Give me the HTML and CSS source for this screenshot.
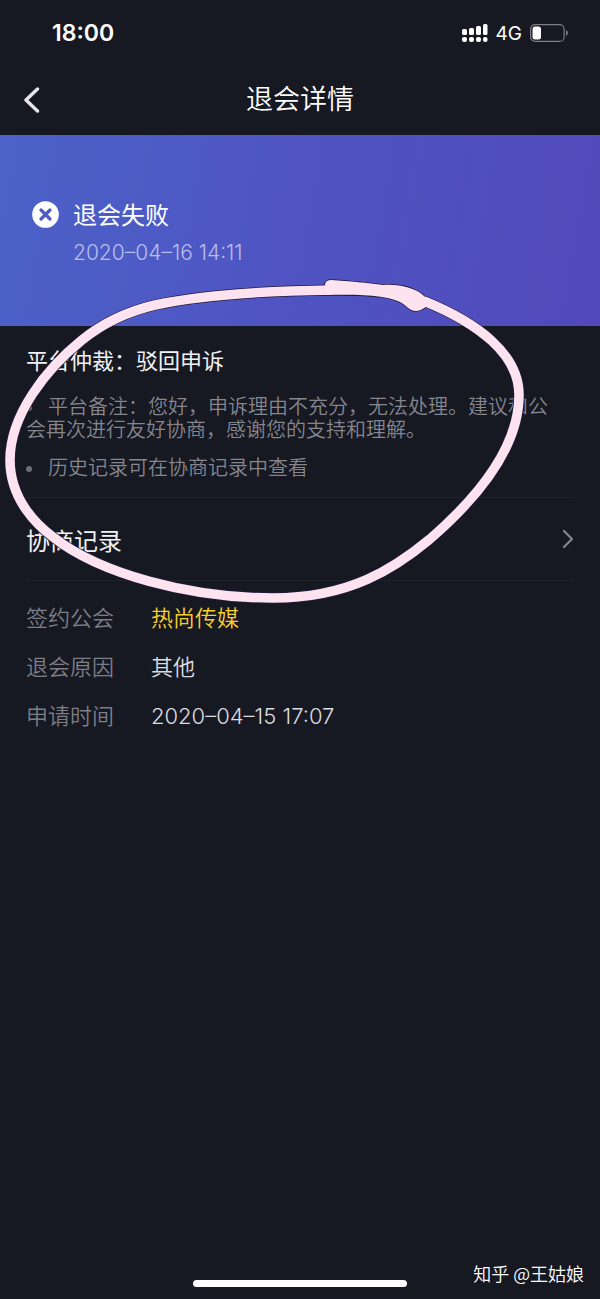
FILE: index.html
```html
<!DOCTYPE html>
<html lang="zh-CN">
<head>
<meta charset="utf-8">
<meta name="viewport" content="width=device-width, initial-scale=1">
<title>退会详情</title>
<link rel="stylesheet" href="styles.css">
</head>
<body>
<div class="page">
  <div class="status-bar">
    <span class="clock">18:00</span>
    <div class="indicators">
      <svg width="26" height="20" viewBox="0 0 26 20" fill="#fff" aria-hidden="true">
        <rect x="0" y="6" width="5" height="6" rx="1.5"/><rect x="7" y="5" width="5" height="7" rx="1.5"/><rect x="14" y="3" width="5" height="9" rx="1.5"/><rect x="21" y="1" width="4.500" height="11" rx="1.500"/>
        <rect x="0" y="14" width="5" height="5" rx="2"/><rect x="7" y="14" width="5" height="5" rx="2"/><rect x="14" y="14" width="5" height="5" rx="2"/><rect x="21" y="14" width="4.500" height="5" rx="2"/>
      </svg>
      <span class="network">4G</span>
      <svg width="38" height="18" viewBox="0 0 38 18" aria-hidden="true">
        <rect x="0.600" y="0.600" width="33.500" height="16.800" rx="4.500" fill="none" stroke="#7d7e86" stroke-width="1.200"/>
        <rect x="2.500" y="2.500" width="8.500" height="13" rx="2.500" fill="#fff"/>
        <path d="M36 6v6c1.200-.6 1.800-1.700 1.800-3S37.200 6.600 36 6z" fill="#7d7e86"/>
      </svg>
    </div>
  </div>

  <header class="nav">
    <button class="back" type="button" aria-label="返回">
      <svg width="16" height="26" viewBox="0 0 16 26" fill="none" stroke="#e6e6ea" stroke-width="3.400" stroke-linecap="round" stroke-linejoin="round" aria-hidden="true"><path d="M13.500 2 2 13 13.500 24"/></svg>
    </button>
    <h1 class="title">退会详情</h1>
  </header>

  <section class="banner">
    <svg width="27" height="27" viewBox="0 0 27 27" aria-hidden="true"><circle cx="13.500" cy="13.500" r="13.300" fill="#fff"/><path d="m9 9 9 9m0-9-9 9" stroke="#4f5bc4" stroke-width="3.200" stroke-linecap="round"/></svg>
    <div>
      <h2 class="result">退会失败</h2>
      <time class="result-time" datetime="2020-04-16T14:11">2020–04–16 14:11</time>
    </div>
  </section>

  <main class="content">
    <section class="verdict">
      <h3 class="verdict-title">平台仲裁：驳回申诉</h3>
      <ul class="notes">
        <li>平台备注：您好，申诉理由不充分，无法处理。建议和公会再次进行友好协商，感谢您的支持和理解。</li>
        <li>历史记录可在协商记录中查看</li>
      </ul>
    </section>
    <button class="records" type="button">
      <span>协商记录</span>
      <svg width="12" height="20" viewBox="0 0 12 20" fill="none" stroke="#85868d" stroke-width="2.200" stroke-linecap="round" stroke-linejoin="round" aria-hidden="true"><path d="m2 2 8 8-8 8"/></svg>
    </button>
    <dl class="details">
      <dt>签约公会</dt><dd class="guild">热尚传媒</dd>
      <dt>退会原因</dt><dd>其他</dd>
      <dt>申请时间</dt><dd>2020–04–15 17:07</dd>
    </dl>
  </main>

  <footer class="footer">
    <div class="home-indicator"></div>
    <span class="watermark">知乎 @王姑娘</span>
  </footer>

  <svg class="marker" width="530" height="610" viewBox="0 0 530 610" fill="none" aria-hidden="true">
    <defs>
      <path id="loop" d="M332 290C260 291 200 295 155 305C125 312 103 323 82 340C46 369 10 415 10 460C10 500 38 526 53 537C100 574 190 598 273 598C350 598 395 568 430 539C475 500 519 450 519 395C519 354 478 323 424 301"/>
      <path id="blob" d="M325 295V284Q326 280 331 280C350 281 368 283 383 285C401 284 415 288 424 296L430 300 427 306Q421 311 416 311Q411 311 407 307C401 301 393 299 382 297C360 294 343 295 325 295Z"/>
    </defs>
    <use href="#loop" stroke="#211b3c" stroke-width="11"/>
    <use href="#blob" fill="#211b3c" stroke="#211b3c" stroke-width="1.500"/>
    <use href="#loop" stroke="#fde2f0" stroke-width="9.500"/>
    <use href="#blob" fill="#fde2f0"/>
  </svg>
</div>
</body>
</html>
```

FILE: styles.css
```css
* {
  box-sizing: border-box;
}

body,
h1,
h2,
h3,
ul,
dl,
dd {
  margin: 0;
  padding: 0;
}

body {
  background: #161822;
  color: #fff;
  font-family: Inter, "Noto Sans CJK SC", sans-serif;
}

button {
  border: 0;
  padding: 0;
  background: none;
  color: inherit;
  font: inherit;
  cursor: pointer;
}

svg {
  display: block;
}

.page {
  position: relative;
  display: flex;
  flex-direction: column;
  min-height: 100vh;
}

.status-bar {
  display: flex;
  align-items: center;
  justify-content: space-between;
  height: 64px;
  padding: 2px 32px 0 52px;
}

.clock {
  font-size: 23px;
  font-weight: 600;
}

.indicators {
  display: flex;
  align-items: center;
  gap: 8px;
}

.network {
  font-size: 19px;
}

.nav {
  display: grid;
  grid-template-columns: 64px 1fr 64px;
  align-items: center;
  height: 71px;
}

.back {
  padding-left: 24px;
}

.title {
  font-size: 27px;
  font-weight: 350;
  line-height: 40px;
  text-align: center;
}

.banner {
  display: flex;
  gap: 14px;
  height: 191px;
  padding: 66px 32px 0;
  background: linear-gradient(100deg, #4b62c8 0%, #4f55c3 45%, #5249bb 100%);
}

.result {
  font-size: 24px;
  font-weight: 400;
  line-height: 30px;
}

.result-time {
  display: block;
  margin-top: 6px;
  color: #b9bdec;
  font-size: 21px;
  font-weight: 300;
  line-height: 32px;
}

.content {
  padding: 0 26px;
}

.verdict {
  padding: 20px 0 17px;
  border-bottom: 1px solid #20222c;
}

.verdict-title {
  font-size: 22px;
  font-weight: 400;
  line-height: 30px;
  color: #f2f2f4;
}

.notes {
  display: grid;
  gap: 15px;
  margin-top: 20px;
  padding-right: 18px;
  color: #85868e;
  font-size: 20px;
  font-weight: 350;
  line-height: 23px;
  list-style: none;
}

.notes li::before {
  content: "";
  display: inline-block;
  width: 6px;
  height: 6px;
  margin: 0 16px 2px 0;
  border-radius: 50%;
  background: #6d6e76;
  vertical-align: middle;
}

.records {
  display: flex;
  align-items: center;
  justify-content: space-between;
  width: 100%;
  height: 83px;
  border-bottom: 1px solid #20222c;
  font-size: 24px;
  font-weight: 400;
  color: #f2f2f4;
}

.details {
  display: grid;
  grid-template-columns: 88px 1fr;
  gap: 17px 37px;
  padding-top: 21px;
  font-size: 22px;
  font-weight: 350;
  line-height: 32px;
}

.details dt {
  color: #7d7e86;
}

.details dd {
  color: #dcdce0;
}

.details .guild {
  color: #f8d02e;
}

.footer {
  position: relative;
  display: flex;
  justify-content: center;
  margin-top: auto;
  padding: 20px 0 12px;
}

.home-indicator {
  width: 214px;
  height: 7px;
  border-radius: 4px;
  background: #fff;
}

.watermark {
  position: absolute;
  right: 16px;
  bottom: 13px;
  font-family: "Noto Sans CJK SC", sans-serif;
  font-size: 18px;
  font-weight: 350;
  line-height: 26px;
}

.marker {
  position: absolute;
  top: 0;
  left: 0;
  pointer-events: none;
}
```
